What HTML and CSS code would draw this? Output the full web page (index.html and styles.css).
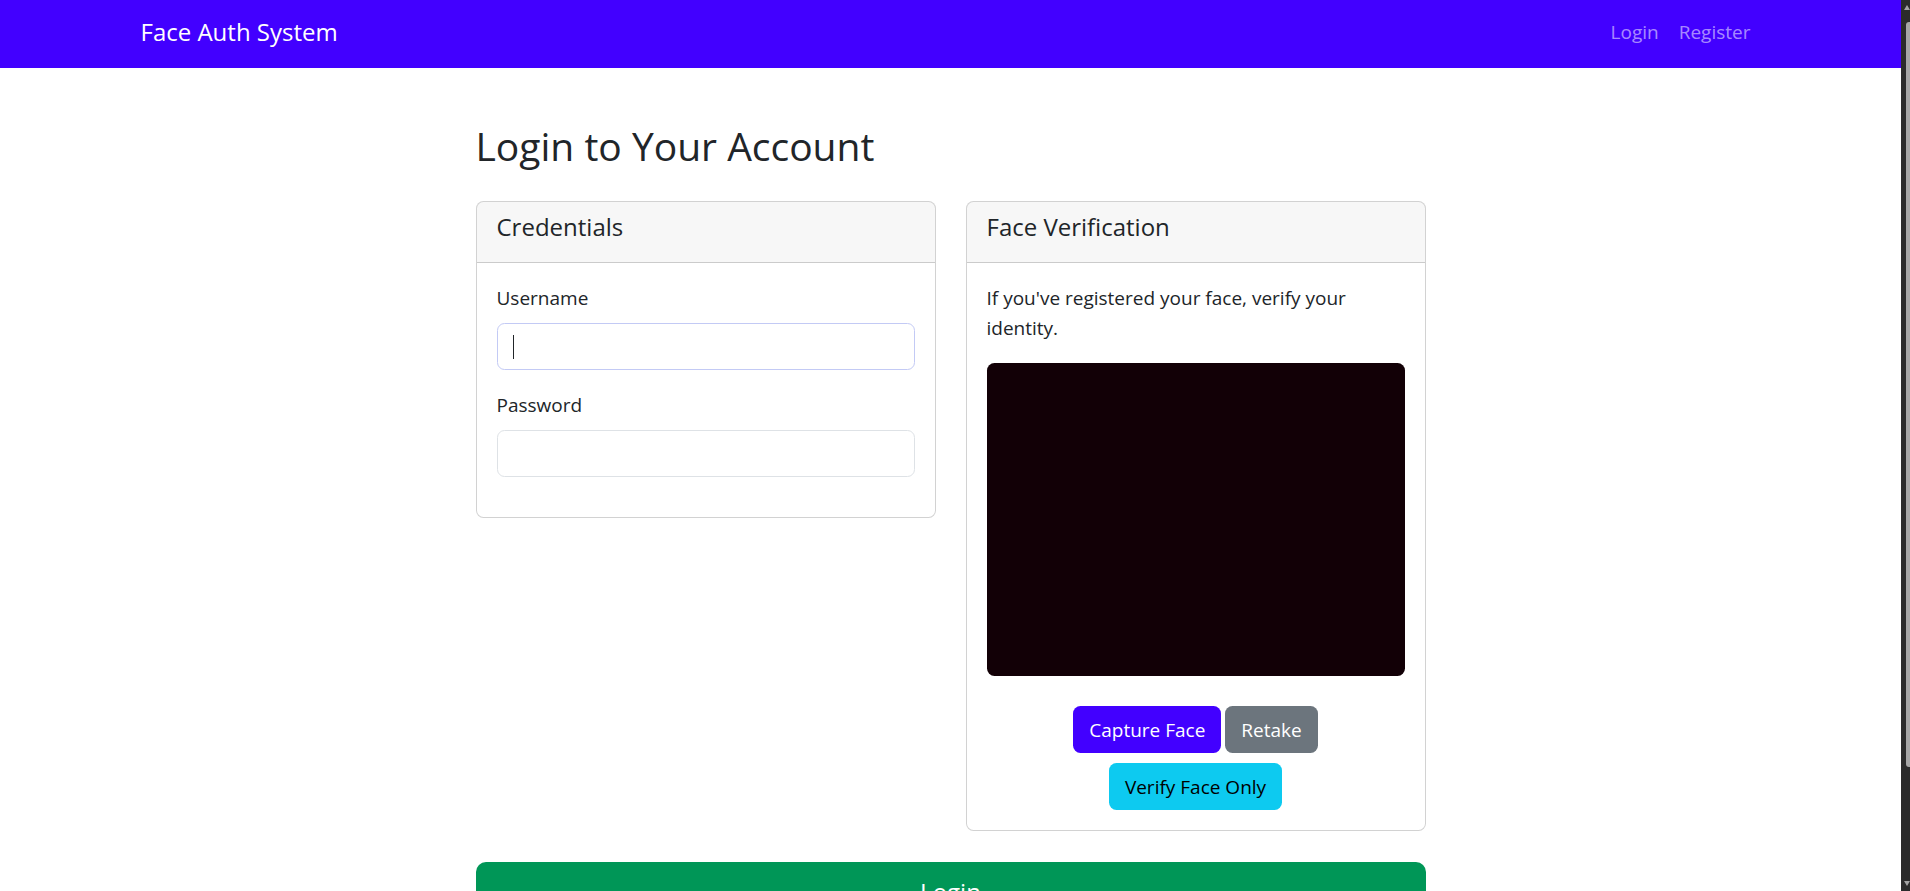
FILE: index.html
```html
<!DOCTYPE html>
<html lang="en">
<head>
<meta charset="utf-8">
<title>Login - Face Auth System</title>
<link rel="stylesheet" href="styles.css">
</head>
<body>
<div class="page">
  <nav class="navbar">
    <div class="nav-container">
      <a class="brand" href="#">Face Auth System</a>
      <ul class="nav-links">
        <li><a href="#">Login</a></li>
        <li><a href="#">Register</a></li>
      </ul>
    </div>
  </nav>

  <main class="main">
    <h2 class="title">Login to Your Account</h2>
    <form class="login-form">
      <div class="cards">
        <section class="card">
          <header class="card-header"><h5>Credentials</h5></header>
          <div class="card-body">
            <div class="field">
              <label class="label" for="username">Username</label>
              <div class="input-wrap">
                <input id="username" class="input input-focus" type="text">
                <span class="caret"></span>
              </div>
            </div>
            <div class="field">
              <label class="label" for="password">Password</label>
              <input id="password" class="input" type="password">
            </div>
          </div>
        </section>

        <section class="card">
          <header class="card-header"><h5>Face Verification</h5></header>
          <div class="card-body">
            <p class="intro">If you've registered your face, verify your identity.</p>
            <div class="video"></div>
            <div class="btn-row">
              <button type="button" class="btn btn-primary">Capture Face</button>
              <button type="button" class="btn btn-secondary">Retake</button>
            </div>
            <div class="btn-row btn-row-tight">
              <button type="button" class="btn btn-info">Verify Face Only</button>
            </div>
          </div>
        </section>
      </div>
      <button type="button" class="btn-login">Login</button>
    </form>
  </main>
</div>
<div class="scrollbar">
  <span class="sb-up"></span>
  <span class="sb-thumb"></span>
  <span class="sb-down"></span>
</div>
</body>
</html>
```

FILE: styles.css
```css
html, body {
  margin: 0;
  height: 100%;
  overflow: hidden;
}

body {
  display: flex;
  font-family: "Open Sans", "Noto Sans", sans-serif;
  font-size: 19px;
  line-height: 30px;
  color: #212529;
  background: #ffffff;
}

.page {
  flex: 1;
  min-width: 0;
}

/* Navbar */
.navbar {
  display: flex;
  height: 68px;
  box-sizing: border-box;
  padding-bottom: 5px;
  background: #4200ff;
}

.nav-container {
  width: 1650px;
  max-width: 100%;
  margin: 0 auto;
  padding: 0 15px;
  box-sizing: border-box;
  display: flex;
  align-items: center;
  justify-content: space-between;
}

.brand {
  color: #ffffff;
  font-size: 24px;
  line-height: 30px;
  text-decoration: none;
}

.nav-links {
  display: flex;
  list-style: none;
  margin: 0;
  padding: 0;
}

.nav-links a {
  display: block;
  padding: 5px 10px;
  color: rgba(255, 255, 255, 0.55);
  text-decoration: none;
}

/* Main */
.main {
  width: 950px;
  margin: 0 auto;
  padding: 54px 0 90px;
}

.title {
  margin: 0 0 31px;
  font-size: 39px;
  line-height: 48px;
  font-weight: 500;
}

.cards {
  display: grid;
  grid-template-columns: 1fr 1fr;
  gap: 30px;
  align-items: start;
}

.card {
  border: 1px solid rgba(0, 0, 0, 0.175);
  border-radius: 7.5px;
  overflow: hidden;
  background: #ffffff;
}

.card-header {
  padding: 10px 20px;
  background: rgba(0, 0, 0, 0.03);
  border-bottom: 1px solid rgba(0, 0, 0, 0.175);
}

.card-header h5 {
  margin: 0 0 10px;
  font-size: 24px;
  line-height: 30px;
  font-weight: 500;
}

.card-body {
  padding: 20px;
}

.field {
  margin-bottom: 20px;
}

.label {
  display: block;
  margin-bottom: 10px;
}

.input-wrap {
  position: relative;
}

.input {
  display: block;
  width: 100%;
  height: 47px;
  box-sizing: border-box;
  padding: 7.5px 15px;
  border: 1px solid #dee2e6;
  border-radius: 7.5px;
  font: inherit;
  color: #212529;
  background: #ffffff;
  outline: none;
}

.input-focus {
  border-color: #c3caf5;
}

.caret {
  position: absolute;
  left: 16px;
  top: 12px;
  width: 1px;
  height: 24px;
  background: #212529;
}

.intro {
  margin: 0 0 20px;
}

.video {
  height: 313px;
  border-radius: 7.5px;
  background: #120006;
}

.btn-row {
  display: flex;
  justify-content: center;
  gap: 4px;
  margin-top: 30px;
}

.btn-row-tight {
  margin-top: 10px;
}

.btn {
  font: inherit;
  padding: 7.5px 15px;
  border: 1px solid transparent;
  border-radius: 7.5px;
  cursor: pointer;
}

.btn-primary {
  background: #4200ff;
  color: #ffffff;
}

.btn-secondary {
  background: #6c757d;
  color: #ffffff;
}

.btn-info {
  background: #0dcaf0;
  color: #000000;
}

.btn-login {
  display: block;
  width: 100%;
  margin-top: 31px;
  padding: 10px 20px;
  border: 1px solid transparent;
  border-radius: 10px;
  background: #009657;
  color: #ffffff;
  font-family: inherit;
  font-size: 24px;
  line-height: 37.5px;
}

/* Window scrollbar (part of the screenshot) */
.scrollbar {
  flex: none;
  width: 9px;
  height: 100vh;
  display: flex;
  flex-direction: column;
  background: #2b2b2b;
}

.sb-up {
  width: 0;
  height: 0;
  margin: 5px 0 0 3px;
  border-left: 3px solid transparent;
  border-right: 3px solid transparent;
  border-bottom: 5px solid #a3a3a3;
}

.sb-thumb {
  height: 745px;
  margin: 12px 0 0 5px;
  border-radius: 3px 0 0 3px;
  background: #a6a6a6;
}

.sb-down {
  width: 0;
  height: 0;
  margin: auto 0 5px 3px;
  border-left: 3px solid transparent;
  border-right: 3px solid transparent;
  border-top: 5px solid #a3a3a3;
}
```
